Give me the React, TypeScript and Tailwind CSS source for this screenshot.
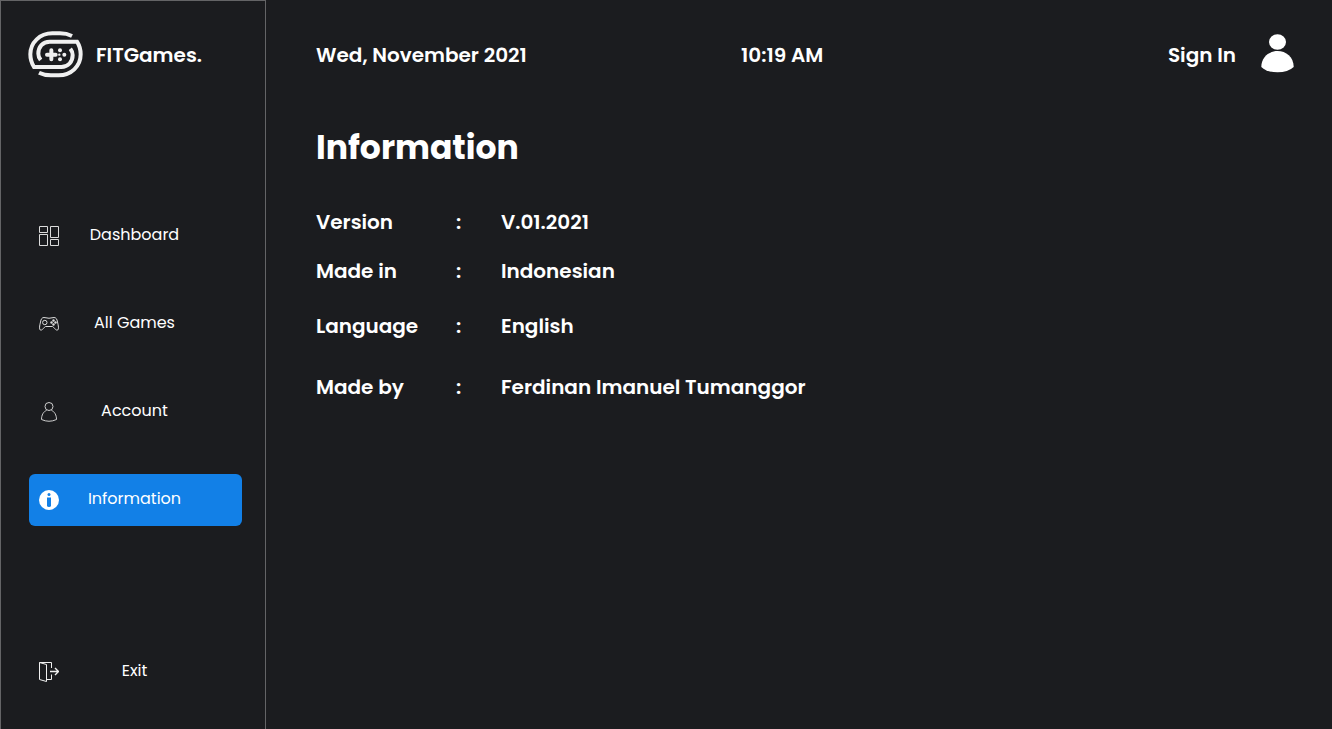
import type { ReactNode } from "react";

function Logo() {
  const half = "M156 33Q140 25 120 25H97C60 25 31 52 31 88Q31 109 42 126H124C145 126 158 110 158 90Q158 80 151 71";
  return (
    <svg className="overflow-visible" width="55" height="46" viewBox="27 21 165 138" fill="none" stroke="#f0f0f0" strokeWidth="12" aria-hidden="true">
      <path d={half} />
      <path d={half} transform="rotate(180 106.5 88)" />
      <path d="M94 76V103M81 89.500H107" strokeLinecap="round" />
      <g fill="#f0f0f0" stroke="none">
        <circle cx="120" cy="76" r="6" />
        <circle cx="120" cy="103" r="6" />
        <circle cx="133" cy="89" r="6" />
        <circle cx="118" cy="89" r="3.500" />
      </g>
    </svg>
  );
}

function DashboardIcon() {
  return (
    <svg width="20" height="20" viewBox="0 0 20 20" fill="none" stroke="#dcdcdc" aria-hidden="true">
      <path d="M.5.5h8v6h-8zM.5 8.500h8v11h-8zM11.500.5h8v11h-8zM11.500 13.500h8v6h-8z" />
    </svg>
  );
}

function GamepadIcon() {
  return (
    <svg width="20" height="20" viewBox="0 0 20 20" fill="none" stroke="#dcdcdc" aria-hidden="true">
      <path d="M5 3.500Q10 5 15 3.500C17 3.500 18 5 18.500 8C19.500 12 20 15 18.700 16C17.500 17 15.500 14 13.500 12.500H6.500C4.500 14 2.500 17 1.300 16C0 15 .5 12 1.500 8C2 5 3 3.500 5 3.500Z" />
      <circle cx="5.800" cy="8.500" r="2.200" />
      <g fill="#dcdcdc" stroke="none">
        <circle cx="14.500" cy="6.500" r="1.200" />
        <circle cx="14.500" cy="10.500" r="1.200" />
        <circle cx="12.500" cy="8.500" r="1.200" />
        <circle cx="16.500" cy="8.500" r="1.200" />
      </g>
    </svg>
  );
}

function PersonIcon() {
  return (
    <svg width="20" height="20" viewBox="0 0 20 20" fill="none" stroke="#cfcfcf" aria-hidden="true">
      <circle cx="10" cy="4.500" r="4" />
      <path d="M7.500 8.500C4.500 9.500 2.500 13 2.500 17.500Q10 21 17.500 17.500C17.500 13 15.500 9.500 12.500 8.500" />
    </svg>
  );
}

function InfoIcon() {
  return (
    <svg width="20" height="20" viewBox="0 0 20 20" aria-hidden="true">
      <circle cx="10" cy="10" r="10" fill="#fff" />
      <circle cx="10" cy="4.500" r="1.500" fill="#1280e7" />
      <path d="M8 7.500h4v8q0 1.500-2 1.500t-2-1.500z" fill="#1280e7" />
    </svg>
  );
}

function ExitIcon() {
  return (
    <svg width="20" height="20" viewBox="0 0 20 20" fill="none" stroke="#f0f0f0" aria-hidden="true">
      <path d="M.5.5L7.500 2.500V19.500L.5 17.500ZM.5.5H12.500V6M12.500 12.500V17.500H7.500" />
      <path d="M11 9.500H19M16 6L19.500 9.500L16 13" strokeWidth="1.400" />
    </svg>
  );
}

function Avatar() {
  return (
    <svg className="overflow-visible" width="34" height="38" viewBox="-1 2 34 38" fill="#fff" aria-hidden="true">
      <ellipse cx="16.500" cy="8" rx="8.500" ry="7.700" />
      <path d="M.3 33C.3 23 8 17 16.500 17S32.700 23 32.700 33Q27 38.300 16.500 38.300T.3 33Z" />
    </svg>
  );
}

function NavItem({ icon, label, active = false }: { icon: ReactNode; label: string; active?: boolean }) {
  return (
    <button
      type="button"
      aria-current={active ? "page" : undefined}
      className={`flex h-13 w-full items-center rounded-md pl-2.5 pr-8 ${active ? "bg-[#1280e7]" : ""}`}
    >
      {icon}
      <span className="flex-1 pb-0.5 text-center">{label}</span>
    </button>
  );
}

const details = [
  { term: "Version", value: "V.01.2021", space: "" },
  { term: "Made in", value: "Indonesian", space: "mt-[19px]" },
  { term: "Language", value: "English", space: "mt-[25px]" },
  { term: "Made by", value: "Ferdinan Imanuel Tumanggor", space: "mt-[31px]" },
];

export default function App() {
  return (
    <div className="flex min-h-screen bg-[#1b1c1f] font-[Poppins,Inter,sans-serif] text-white">
      <aside className="flex w-[266px] shrink-0 flex-col border-x border-t border-[#646466] pb-[31px] pl-7 pr-[23px] pt-[30px]">
        <div className="flex h-12 items-center gap-3">
          <Logo />
          <span className="text-xl font-semibold">FITGames.</span>
        </div>
        <nav aria-label="Main" className="mt-[131px] flex flex-1 flex-col gap-9 text-base">
          <NavItem icon={<DashboardIcon />} label="Dashboard" />
          <NavItem icon={<GamepadIcon />} label="All Games" />
          <NavItem icon={<PersonIcon />} label="Account" />
          <NavItem icon={<InfoIcon />} label="Information" active />
          <div className="mt-auto">
            <NavItem icon={<ExitIcon />} label="Exit" />
          </div>
        </nav>
      </aside>
      <main className="flex-1 pl-[50px] pr-[38px] pt-[31px]">
        <header className="grid h-12 grid-cols-[425px_1fr_auto] items-center text-xl font-semibold">
          <span>Wed, November 2021</span>
          <time dateTime="10:19">10:19 AM</time>
          <a href="#sign-in" className="flex items-center gap-6">
            Sign In
            <Avatar />
          </a>
        </header>
        <h1 className="mt-[45px] text-[33px] font-bold leading-12">Information</h1>
        <dl className="mt-[35px] text-xl font-semibold">
          {details.map((d) => (
            <div key={d.term} className={`grid grid-cols-[140px_45px_1fr] leading-[30px] ${d.space}`}>
              <dt className="contents">
                <span>{d.term}</span>
                <span>:</span>
              </dt>
              <dd>{d.value}</dd>
            </div>
          ))}
        </dl>
      </main>
    </div>
  );
}
